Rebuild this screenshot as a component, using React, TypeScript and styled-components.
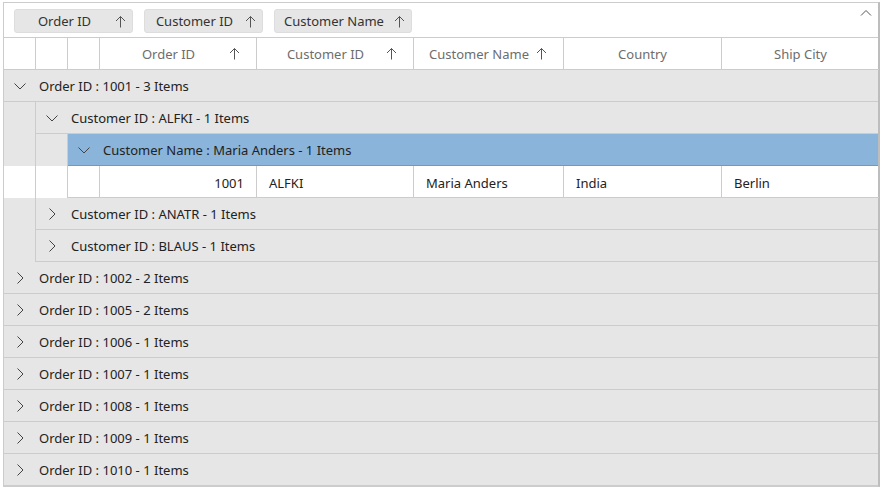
import React from "react";
import styled, { createGlobalStyle } from "styled-components";

const Global = createGlobalStyle`
  html, body { margin: 0; padding: 0; background: #ffffff; }
  body { font-family: "Segoe UI", "Noto Sans", "Open Sans", sans-serif; color: #333333; }
`;

const Page = styled.div`
  padding: 2px 3px 0 3px;
  width: 883px;
  box-sizing: border-box;
`;

const Grid = styled.div`
  width: 877px;
  border: 1px solid #cccccc;
  border-right: 2px solid #bdbdbd;
  box-sizing: border-box;
  font-size: 13px;
`;

const DropArea = styled.div`
  height: 35px;
  box-sizing: border-box;
  border-bottom: 1px solid #cccccc;
  display: flex;
  align-items: center;
  gap: 11px;
  padding: 1px 0 0 10px;
  position: relative;
`;

const Chip = styled.div`
  min-width: 119px;
  height: 24px;
  box-sizing: border-box;
  background: #e6e6e6;
  border: 1px solid #dddddd;
  border-radius: 3px;
  display: flex;
  align-items: center;
  padding: 1px 6px 0 9px;
  gap: 10px;
  color: #333333;
`;

const ChipText = styled.span`
  flex: 1;
  text-align: center;
  white-space: nowrap;
`;

const CollapseBtn = styled.div`
  position: absolute;
  right: 6px;
  top: 6px;
  width: 12px;
  height: 10px;
  display: flex;
`;

const Row = styled.div<{ $bg?: string }>`
  display: flex;
  height: 32px;
  background: ${(p) => p.$bg || "#ffffff"};
`;

const Indent = styled.div<{ $bg?: string; $line?: boolean }>`
  width: 32px;
  flex: none;
  box-sizing: border-box;
  border-right: 1px solid #cccccc;
  border-bottom: ${(p) => (p.$line ? "1px solid #cccccc" : "none")};
  background: ${(p) => p.$bg || "#e6e6e6"};
`;

const HeaderIndent = styled(Indent)`
  background: #ffffff;
  border-bottom: 1px solid #cccccc;
`;

const HeaderCell = styled.div<{ $w: number; $sorted?: boolean }>`
  width: ${(p) => p.$w}px;
  flex: none;
  box-sizing: border-box;
  border-right: 1px solid #cccccc;
  border-bottom: 1px solid #cccccc;
  display: flex;
  align-items: center;
  padding: ${(p) => (p.$sorted ? "0 16px 0 10px" : "0 10px")};
  gap: 2px;
  color: #6d6d6d;
  &:last-child { border-right: none; }
`;

const HeaderText = styled.span`
  flex: 1;
  text-align: center;
  white-space: nowrap;
`;

const GroupCaption = styled.div<{ $active?: boolean }>`
  flex: 1;
  display: flex;
  align-items: center;
  box-sizing: border-box;
  border-bottom: 1px solid ${(p) => (p.$active ? "#6e9bc5" : "#cccccc")};
  background: ${(p) => (p.$active ? "#8ab4d9" : "#e6e6e6")};
  color: #222222;
  white-space: nowrap;
`;

const Toggle = styled.div`
  width: 32px;
  flex: none;
  display: flex;
  align-items: center;
  justify-content: center;
`;

const CaptionText = styled.span`
  padding-left: 3px;
`;

const Cell = styled.div<{ $w: number; $right?: boolean }>`
  width: ${(p) => p.$w}px;
  flex: none;
  box-sizing: border-box;
  border-right: 1px solid #cccccc;
  border-bottom: 1px solid #cccccc;
  display: flex;
  align-items: center;
  justify-content: ${(p) => (p.$right ? "flex-end" : "flex-start")};
  padding: 3px 12px 0 12px;
  color: #222222;
  white-space: nowrap;
  &:last-child { border-right: none; }
`;

const ArrowUp = () => (
  <svg width="11" height="13" viewBox="0 0 11 13" fill="none" stroke="#555" strokeWidth="1">
    <path d="M5.5 1.5 V12.5 M1 6 L5.5 1.5 L10 6" />
  </svg>
);

const ChevronDown = () => (
  <svg width="12" height="8" viewBox="0 0 12 8" fill="none" stroke="#444" strokeWidth="1">
    <path d="M0.5 1.5 L6 7 L11.5 1.5" />
  </svg>
);

const ChevronRight = () => (
  <svg width="8" height="12" viewBox="0 0 8 12" fill="none" stroke="#444" strokeWidth="1">
    <path d="M1.5 0.5 L7 6 L1.5 11.5" />
  </svg>
);

const ChevronUp = () => (
  <svg width="12" height="8" viewBox="0 0 12 8" fill="none" stroke="#555" strokeWidth="1">
    <path d="M1 6.5 L6 1.5 L11 6.5" />
  </svg>
);

const columns = [
  { title: "Order ID", w: 157, sorted: true },
  { title: "Customer ID", w: 157, sorted: true },
  { title: "Customer Name", w: 150, sorted: true },
  { title: "Country", w: 158, sorted: false },
  { title: "Ship City", w: 157, sorted: false },
];

const GroupRow = ({
  level,
  text,
  expanded,
  active,
}: {
  level: number;
  text: string;
  expanded?: boolean;
  active?: boolean;
}) => (
  <Row $bg="#e6e6e6">
    {Array.from({ length: level }).map((_, i) => (
      <Indent key={i} />
    ))}
    <GroupCaption $active={active}>
      <Toggle>{expanded ? <ChevronDown /> : <ChevronRight />}</Toggle>
      <CaptionText>{text}</CaptionText>
    </GroupCaption>
  </Row>
);

const others = [
  "Order ID : 1002 - 2 Items",
  "Order ID : 1005 - 2 Items",
  "Order ID : 1006 - 1 Items",
  "Order ID : 1007 - 1 Items",
  "Order ID : 1008 - 1 Items",
  "Order ID : 1009 - 1 Items",
  "Order ID : 1010 - 1 Items",
];

export default function App() {
  return (
    <Page>
      <Global />
      <Grid>
        <DropArea>
          {["Order ID", "Customer ID", "Customer Name"].map((t) => (
            <Chip key={t}>
              <ChipText>{t}</ChipText>
              <ArrowUp />
            </Chip>
          ))}
          <CollapseBtn>
            <ChevronUp />
          </CollapseBtn>
        </DropArea>
        <Row>
          <HeaderIndent />
          <HeaderIndent />
          <HeaderIndent />
          {columns.map((c) => (
            <HeaderCell key={c.title} $w={c.w} $sorted={c.sorted}>
              <HeaderText>{c.title}</HeaderText>
              {c.sorted && <ArrowUp />}
            </HeaderCell>
          ))}
        </Row>
        <GroupRow level={0} text="Order ID : 1001 - 3 Items" expanded />
        <GroupRow level={1} text="Customer ID : ALFKI - 1 Items" expanded />
        <GroupRow level={2} text="Customer Name : Maria Anders - 1 Items" expanded active />
        <Row>
          <Indent $bg="#ffffff" />
          <Indent $bg="#ffffff" />
          <Indent $bg="#ffffff" $line />
          <Cell $w={157} $right>1001</Cell>
          <Cell $w={157}>ALFKI</Cell>
          <Cell $w={150}>Maria Anders</Cell>
          <Cell $w={158}>India</Cell>
          <Cell $w={157}>Berlin</Cell>
        </Row>
        <GroupRow level={1} text="Customer ID : ANATR - 1 Items" />
        <GroupRow level={1} text="Customer ID : BLAUS - 1 Items" />
        {others.map((t) => (
          <GroupRow key={t} level={0} text={t} />
        ))}
      </Grid>
    </Page>
  );
}
